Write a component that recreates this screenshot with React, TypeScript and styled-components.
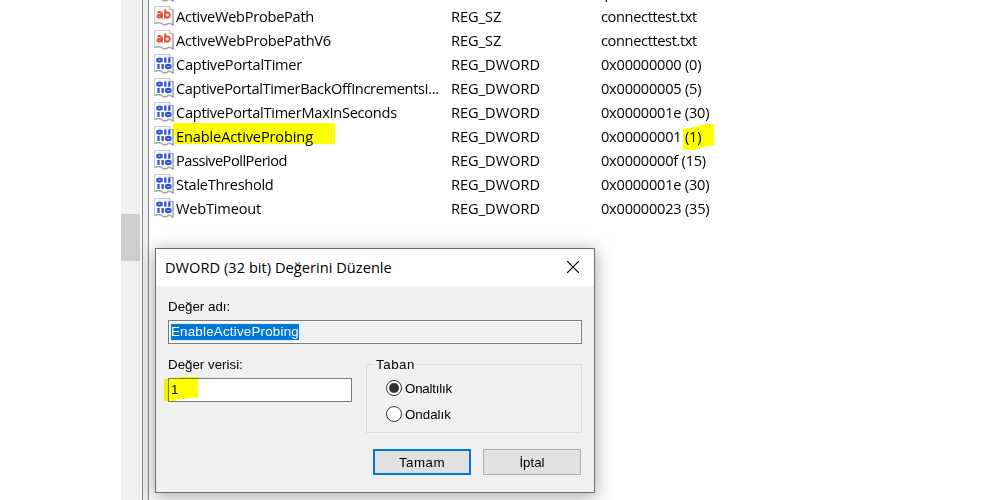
import React from 'react';
import styled, { createGlobalStyle, css } from 'styled-components';

const GlobalStyle = createGlobalStyle`
  body {
    margin: 0;
    background: #fff;
    overflow: hidden;
  }
  * { box-sizing: border-box; }
`;

const systemFont = css`
  font-family: 'Open Sans', 'Noto Sans', sans-serif;
  font-size: 14.6px;
`;

const Window = styled.main`
  position: relative;
  display: flex;
  width: 1002px;
  height: 500px;
  padding-left: 121px;
  overflow: hidden;
  background: #fff;
  color: #000;
  ${systemFont}
`;

const ScrollTrack = styled.div`
  width: 20px;
  padding-top: 214px;
  background: #f0f0f0;
`;

const ScrollThumb = styled.div`
  width: 19px;
  height: 47px;
  background: #cdcdcd;
`;

const Splitter = styled.div`
  width: 7px;
  margin-left: 1px;
  border: 1px solid #828790;
  border-width: 0 1px;
  background: #f0f0f0;
`;

const ValueList = styled.div`
  flex: 1;
  margin-top: -20px;
  padding-left: 5px;
`;

const Row = styled.div`
  display: grid;
  grid-template-columns: 22px 275px 150px 300px;
  height: 24px;
  line-height: 25px;
  white-space: pre;
`;

const RowIcon = styled.svg`
  width: 20px;
  height: 20px;
  margin-top: 2px;
`;

const Label = styled.span<{ $tracking?: number }>`
  letter-spacing: ${({ $tracking = 0 }) => $tracking}px;
  white-space: pre;
`;

const Marker = styled.div<{ $x: number; $y: number; $w: number; $h: number; $shape: string }>`
  position: absolute;
  left: ${({ $x }) => $x}px;
  top: ${({ $y }) => $y}px;
  width: ${({ $w }) => $w}px;
  height: ${({ $h }) => $h}px;
  clip-path: polygon(${({ $shape }) => $shape});
  background: #ff0;
  mix-blend-mode: multiply;
  pointer-events: none;
`;

const Dialog = styled.section`
  position: absolute;
  left: 155px;
  top: 248px;
  width: 440px;
  height: 245px;
  border: 1px solid #6e6e6e;
  background: #f0f0f0;
  box-shadow: 0 3px 16px 1px rgba(0, 0, 0, 0.34);
  font: 13.33px 'Liberation Sans', Arial, sans-serif;
`;

const TitleBar = styled.header`
  display: flex;
  align-items: center;
  justify-content: space-between;
  height: 37px;
  padding: 0 15px 1px 9px;
  background: #fff;
  ${systemFont}
  line-height: 20px;
`;

const CloseIcon = styled.svg`
  width: 12px;
  height: 12px;
`;

const DialogBody = styled.div`
  padding: 13px 12px 0;
`;

const FieldLabel = styled.div`
  height: 21px;
  line-height: 16px;
`;

const TextField = styled.div<{ $readOnly?: boolean }>`
  display: flex;
  align-items: center;
  height: 24px;
  padding: 0 2px 1px;
  border: 1px solid #7a7a7a;
  background: ${({ $readOnly }) => ($readOnly ? '#f0f0f0' : '#fff')};
  box-shadow: inset 0 0 0 1px #fff;
`;

const Selection = styled.span`
  height: 16px;
  background: #0078d7;
  color: #fff;
  line-height: 16px;
  letter-spacing: 0.22px;
`;

const FieldValue = styled.span`
  line-height: 16px;
`;

const Columns = styled.div`
  display: flex;
  gap: 14px;
  margin-top: 13px;
`;

const DataColumn = styled.div`
  width: 184px;
`;

const GroupBox = styled.fieldset`
  width: 216px;
  height: 77px;
  min-width: 0;
  margin: -1px 0 0;
  padding: 2px 0 0 19px;
  border: 1px solid #dcdcdc;
`;

const Legend = styled.legend`
  height: 17px;
  margin-left: -13px;
  padding: 0 2px 0 3px;
  line-height: 17px;
  letter-spacing: 0.54px;
`;

const Option = styled.label`
  display: flex;
  align-items: center;
  gap: 3px;
  height: 26px;
`;

const RadioDot = styled.svg`
  width: 16px;
  height: 16px;
`;

const Buttons = styled.footer`
  display: flex;
  justify-content: flex-end;
  gap: 12px;
  margin: 16px 1px 0 0;
`;

const Button = styled.button<{ $primary?: boolean }>`
  width: 98px;
  height: 26px;
  padding: 0;
  border: ${({ $primary }) => ($primary ? '2px solid #0078d7' : '1px solid #adadad')};
  border-radius: 0;
  background: #e1e1e1;
  color: #000;
  font: inherit;
`;

type Kind = 'string' | 'binary';

const ValueIcon = ({ kind }: { kind: Kind }) => (
  <RowIcon viewBox="0 0 20 20" fill="none">
    <path d="M.5.5h15.5l3 3v16c-1.5-1.8-3.6-2.6-5.4-1.6-1.8 1.2-3.6 1.5-5.2.2C6.600 16.400 4 16.300.5 17.500z" fill="#f7f7f7" stroke="#cfcfcf" />
    <path d="M19 3.500v16c-1.500-1.800-3.600-2.600-5.400-1.600-1.800 1.200-3.600 1.500-5.200.2C6.600 16.400 4 16.300.5 17.500" stroke="#a0a0a0" strokeWidth="1.3" />
    <path d="M15.700.5v3H19" fill="#fff" stroke="#b0b0b0" />
    {kind === 'string' ? (
      <g stroke="#dc5233" strokeWidth="2">
        <path d="M3.600 6.600c1.700-.8 4.200-.7 4.200 1v4.900M7.800 8.900c-2.200-.1-4.300.1-4.300 1.500 0 1.700 3.300 1.500 4.300-.1" />
        <path d="M11.200 3.500v9M11.200 7.200c1.300-1.300 4.600-1.100 4.600 1.800s-3.300 3.200-4.600 1.700" />
      </g>
    ) : (
      <g stroke="#2f50dc" strokeWidth="2.200">
        <ellipse cx="5.500" cy="6.100" rx="2.300" ry="1.600" />
        <path d="M11.300 3.500v5.200M15.300 3.500v5.200M4.500 10v5M8.600 10v5" />
        <ellipse cx="14.300" cy="12.500" rx="2.300" ry="1.600" />
      </g>
    )}
  </RowIcon>
);

const Radio = ({ checked = false }: { checked?: boolean }) => (
  <RadioDot viewBox="0 0 16 16">
    <circle cx="8" cy="8" r="7.5" fill="#fff" stroke="#333" />
    {checked && <circle cx="8" cy="8" r="5" fill="#333" />}
  </RadioDot>
);

interface RegistryValue {
  name: string;
  kind: Kind;
  data: string;
  nameTracking: number;
  dataTracking: number;
}

const value = (name: string, kind: Kind, data: string, nameTracking: number, dataTracking = -0.23): RegistryValue =>
  ({ name, kind, data, nameTracking, dataTracking });

const values: RegistryValue[] = [
  value('ActiveWebProbeHostV6', 'string', 'ipv6.msftconnecttest.com', -0.25, -0.3),
  value('ActiveWebProbePath', 'string', 'connecttest.txt', -0.27, -0.37),
  value('ActiveWebProbePathV6', 'string', 'connecttest.txt', -0.25, -0.37),
  value('CaptivePortalTimer', 'binary', '0x00000000 (0)', -0.25),
  value('CaptivePortalTimerBackOffIncrementsI...', 'binary', '0x00000005 (5)', -0.35),
  value('CaptivePortalTimerMaxInSeconds', 'binary', '0x0000001e (30)', -0.28),
  value('EnableActiveProbing', 'binary', '0x00000001 (1)', -0.14),
  value('PassivePollPeriod', 'binary', '0x0000000f (15)', -0.48),
  value('StaleThreshold', 'binary', '0x0000001e (30)', -0.3),
  value('WebTimeout', 'binary', '0x00000023 (35)', -0.2),
];

export default function App() {
  return (
    <Window>
      <GlobalStyle />
      <ScrollTrack>
        <ScrollThumb />
      </ScrollTrack>
      <Splitter />
      <ValueList>
        {values.map((v) => (
          <Row key={v.name}>
            <ValueIcon kind={v.kind} />
            <Label $tracking={v.nameTracking}>{v.name}</Label>
            <Label>{v.kind === 'string' ? 'REG_SZ' : 'REG_DWORD'}</Label>
            <Label $tracking={v.dataTracking}>{v.data}</Label>
          </Row>
        ))}
      </ValueList>
      <Marker $x={173} $y={123} $w={162} $h={21} $shape="0 0, 100% 0, 100% 100%, 2px 100%, 2px 12px, 0 12px" />
      <Marker $x={683} $y={124} $w={31} $h={26} $shape="0 5px, 12px 3px, 22px 0, 100% 0, 100% 21px, 20px 23px, 12px 26px, 0 26px" />

      <Dialog>
        <TitleBar>
          <Label $tracking={0.03}>DWORD (32 bit) Değerini Düzenle</Label>
          <CloseIcon viewBox="0 0 12 12">
            <path d="M0 0l12 12M12 0L0 12" stroke="#000" strokeWidth="1.15" />
          </CloseIcon>
        </TitleBar>
        <DialogBody>
          <FieldLabel>Değer adı:</FieldLabel>
          <TextField $readOnly>
            <Selection>EnableActiveProbing</Selection>
          </TextField>
          <Columns>
            <DataColumn>
              <FieldLabel>Değer verisi:</FieldLabel>
              <TextField>
                <FieldValue>1</FieldValue>
              </TextField>
            </DataColumn>
            <GroupBox>
              <Legend>Taban</Legend>
              <Option>
                <Radio checked />
                <Label $tracking={-0.21}>Onaltılık</Label>
              </Option>
              <Option>
                <Radio />
                <Label>Ondalık</Label>
              </Option>
            </GroupBox>
          </Columns>
          <Buttons>
            <Button $primary>
              <Label $tracking={0.46}>Tamam</Label>
            </Button>
            <Button>
              <Label>İptal</Label>
            </Button>
          </Buttons>
        </DialogBody>
      </Dialog>
      <Marker $x={164} $y={377} $w={34} $h={24} $shape="0 2px, 16px 2px, 16px 0, 100% 0, 100% 21px, 24px 21px, 22px 22px, 12px 22px, 12px 100%, 0 100%" />
    </Window>
  );
}
